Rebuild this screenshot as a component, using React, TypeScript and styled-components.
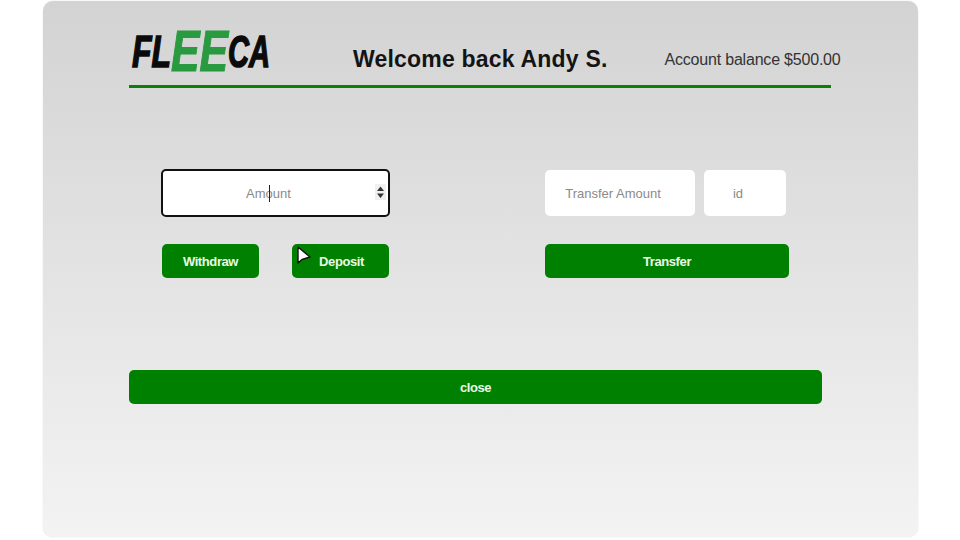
import React from "react";
import styled, { createGlobalStyle } from "styled-components";

const Global = createGlobalStyle`
  html, body { margin: 0; padding: 0; background: #fff; width: 960px; height: 540px; overflow: hidden; }
  * { box-sizing: border-box; }
  #root { font-family: "Liberation Sans", Arial, sans-serif; }
`;

const Stage = styled.div`
  width: 960px;
  height: 540px;
  padding: 1px 0 3px 43px;
  display: flex;
`;

const Panel = styled.main`
  position: relative;
  flex: none;
  width: 875px;
  border-radius: 10px;
  background: linear-gradient(180deg, #d3d3d3 0%, #f3f3f3 100%);
  box-shadow: 0 0 1px rgba(120, 120, 120, 0.5);
  padding: 0 0 0 86px;
  display: flex;
  flex-direction: column;
`;

const Header = styled.header`
  width: 702px;
  height: 87px;
  flex: none;
  border-bottom: 3px solid #0a800a;
  display: flex;
  align-items: flex-start;
  white-space: nowrap;
`;

const LogoBox = styled.svg`
  flex: none;
  width: 224px;
  height: 84px;
`;

const LogoText = styled.text<{ $green?: boolean }>`
  font-family: "Liberation Sans", Arial, sans-serif;
  font-weight: 700;
  font-style: italic;
  font-size: ${(p) => (p.$green ? 57 : 45)}px;
  fill: ${(p) => (p.$green ? "#2a9a40" : "#0b0b0b")};
  stroke: ${(p) => (p.$green ? "#2a9a40" : "#0b0b0b")};
  stroke-width: ${(p) => (p.$green ? 1.2 : 1.6)}px;
`;

const Title = styled.h1`
  margin: 44px 0 0;
  flex: none;
  font-size: 23px;
  line-height: 28px;
  font-weight: 700;
  color: #141414;
  letter-spacing: 0.2px;
`;

const Balance = styled.div`
  margin: 49px 0 0 57px;
  flex: none;
  font-size: 16px;
  letter-spacing: -0.2px;
  line-height: 20px;
  color: #333;
`;

const Forms = styled.section`
  display: flex;
  margin-top: 81px;
  padding-left: 32px;
`;

const Group = styled.div<{ $width: number; $gap?: number }>`
  width: ${(p) => p.$width}px;
  margin-right: ${(p) => p.$gap ?? 0}px;
  display: flex;
  flex-direction: column;
  gap: 27px;
`;

const ButtonRow = styled.div`
  display: flex;
  gap: 33px;
  height: 34px;
  padding-left: 1px;
`;

const FieldRow = styled.div`
  display: flex;
  gap: 9px;
  height: 48px;
  padding-top: 1px;
`;

const FieldWrap = styled.div`
  position: relative;
  height: 48px;
`;

const Field = styled.input<{ $focused?: boolean; $width?: number }>`
  width: ${(p) => (p.$width ? `${p.$width}px` : "100%")};
  height: ${(p) => (p.$focused ? "48px" : "46px")};
  border: ${(p) => (p.$focused ? "2px solid #111" : "0")};
  border-radius: 5px;
  background: #fff;
  text-align: center;
  font-family: "Liberation Sans", Arial, sans-serif;
  font-size: 13px;
  outline: none;
  padding: 0 14px 0 0;
  &::placeholder { color: #8a8a8a; opacity: 1; }
`;

const Caret = styled.span`
  position: absolute;
  left: 108px;
  top: 16px;
  width: 1px;
  height: 17px;
  background: #222;
`;

const Spinner = styled.svg`
  position: absolute;
  right: 4px;
  top: 15px;
  width: 11px;
  height: 16px;
  background: #f0f0f0;
`;

const Button = styled.button<{ $width?: number }>`
  width: ${(p) => (p.$width ? `${p.$width}px` : "100%")};
  height: 34px;
  flex: none;
  border: 0;
  border-radius: 5px;
  padding: 0;
  background: #008000;
  color: #eafbe6;
  font-family: "Liberation Sans", Arial, sans-serif;
  font-size: 13px;
  letter-spacing: -0.4px;
  font-weight: 700;
`;

const DepositButton = styled(Button)`
  padding-left: 2px;
`;

const Close = styled(Button)`
  width: 693px;
  margin-top: 92px;
`;

const Pointer = styled.svg`
  position: absolute;
  left: 254px;
  top: 245px;
  width: 15px;
  height: 20px;
`;

export default function App() {
  return (
    <>
      <Global />
      <Stage>
        <Panel>
          <Header>
            <LogoBox viewBox="0 0 224 84">
              <LogoText $green x="42" y="70" textLength="57" lengthAdjust="spacingAndGlyphs">EE</LogoText>
              <LogoText x="3" y="66" textLength="39" lengthAdjust="spacingAndGlyphs">FL</LogoText>
              <LogoText x="99" y="66" textLength="42" lengthAdjust="spacingAndGlyphs">CA</LogoText>
            </LogoBox>
            <Title>Welcome back Andy S.</Title>
            <Balance>Account balance $500.00</Balance>
          </Header>
          <Forms>
            <Group $width={229} $gap={155}>
              <FieldWrap>
                <Field $focused placeholder="Amount" />
                <Caret />
                <Spinner viewBox="0 0 11 16">
                  <path d="M5.5 2.5 L9 7 H2 Z M5.5 14 L2 9.5 H9 Z" fill="#333" />
                </Spinner>
              </FieldWrap>
              <ButtonRow>
                <Button $width={97}>Withdraw</Button>
                <DepositButton $width={97}>Deposit</DepositButton>
              </ButtonRow>
            </Group>
            <Group $width={244}>
              <FieldRow>
                <Field $width={150} placeholder="Transfer Amount" />
                <Field $width={82} placeholder="id" />
              </FieldRow>
              <Button>Transfer</Button>
            </Group>
          </Forms>
          <Close>close</Close>
          <Pointer viewBox="0 0 15 20">
            <path d="M1 1 L1 17 L5 13.5 L13 11 Z" fill="#fff" stroke="#111" strokeWidth="1.4" strokeLinejoin="round" />
          </Pointer>
        </Panel>
      </Stage>
    </>
  );
}
